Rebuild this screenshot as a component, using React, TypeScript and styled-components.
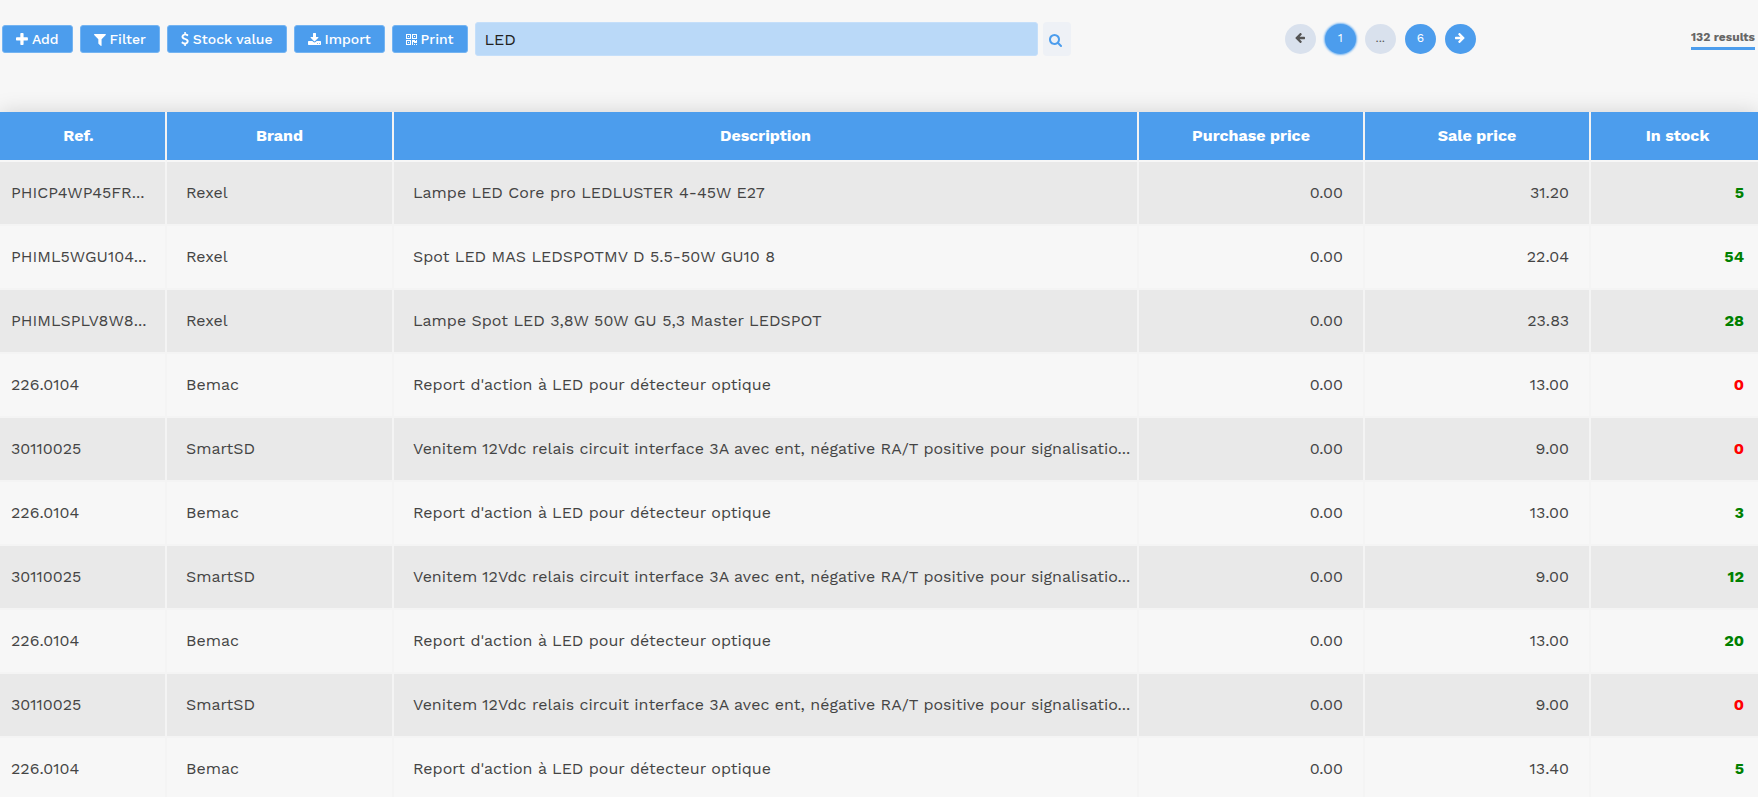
import React from "react";
import styled, { createGlobalStyle } from "styled-components";

const blue = "#4c9ded";
const page = "#f7f7f7";

const GlobalStyle = createGlobalStyle`
  * { box-sizing: border-box; }
  body {
    margin: 0;
    background: ${page};
    color: #444;
    font-family: "Work Sans", Inter, "Liberation Sans", sans-serif;
    font-size: 16px;
    overflow-x: hidden;
    scrollbar-width: none;
  }
  button, input { font-family: inherit; }
`;

const icons = {
  plus: {
    box: "192 128 1408 1536",
    d: "M1600 736v192q0 40-28 68t-68 28h-416v416q0 40-28 68t-68 28h-192q-40 0-68-28t-28-68v-416h-416q-40 0-68-28t-28-68v-192q0-40 28-68t68-28h416v-416q0-40 28-68t68-28h192q40 0 68 28t28 68v416h416q40 0 68 28t28 68z",
  },
  filter: {
    box: "192 128 1408 1536",
    d: "M1595 295q17 41-14 70l-493 493v742q0 42-39 59-13 5-25 5-27 0-45-19l-256-256q-19-19-19-45v-486l-493-493q-31-29-14-70 17-39 59-39h1280q42 0 59 39z",
  },
  dollar: {
    box: "384 0 1024 1792",
    d: "M1362 1185q0 153-99.500 263.500t-258.500 136.500v175q0 14-9 23t-23 9h-135q-13 0-22.500-9.500t-9.500-22.500v-175q-66-9-127.500-31t-101.500-44.500-74-48-46.500-37.500-17.500-18q-17-21-2-41l103-135q7-10 23-12 15-2 24 9l2 2q113 99 243 125 37 8 74 8 81 0 142.500-43t61.500-122q0-28-15-53t-33.500-42-58.500-37.500-66-32-80-32.500q-39-16-61.500-25t-61.500-26.500-62.500-31-56.500-35.500-53.500-42.500-43.500-49-35.500-58-21-66.500-8.500-78q0-138 98-242t255-134v-180q0-13 9.500-22.500t22.500-9.500h135q14 0 23 9t9 23v176q57 6 110.500 23t87 33.500 63.500 37.500 39 29 15 14q17 18 5 38l-81 146q-8 15-23 16-14 3-27-7-3-3-14.500-12t-39-26.500-58.500-32-74.500-26-85.500-11.500q-95 0-155 43t-60 111q0 26 8.500 48t29.500 41.500 39.500 33 56 31 60.500 27 70 27.500q53 20 81 31.500t76 35 75.500 42.500 62 50 53 63.500 31.500 76.500 13 94z",
  },
  download: {
    box: "0 0 1664 1536",
    d: "M1280 1344q0-26-19-45t-45-19-45 19-19 45 19 45 45 19 45-19 19-45zm256 0q0-26-19-45t-45-19-45 19-19 45 19 45 45 19 45-19 19-45zm128-224v320q0 40-28 68t-68 28h-1472q-40 0-68-28t-28-68v-320q0-40 28-68t68-28h465l135 136q58 56 136 56t136-56l136-136h464q40 0 68 28t28 68zm-325-569q17 41-14 70l-448 448q-18 19-45 19t-45-19l-448-448q-31-29-14-70 17-39 59-39h256v-448q0-26 19-45t45-19h256q26 0 45 19t19 45v448h256q42 0 59 39z",
  },
  qrcode: {
    box: "0 0 1408 1408",
    d: "M384 1024v128h-128v-128h128zm0-768v128h-128v-128h128zm768 0v128h-128v-128h128zm-1024 1023h384v-383h-384v383zm0-767h384v-384h-384v384zm768 0h384v-384h-384v384zm-256 256v640h-640v-640h640zm512 512v128h-128v-128h128zm256 0v128h-128v-128h128zm0-512v384h-384v-128h-128v384h-128v-640h384v128h128v-128h128zm-768-768v640h-640v-640h640zm768 0v640h-640v-640h640z",
  },
  search: {
    box: "64 128 1664 1664",
    d: "M1216 832q0-185-131.500-316.500t-316.500-131.500-316.500 131.500-131.500 316.500 131.500 316.500 316.500 131.500 316.500-131.500 131.500-316.500zm512 832q0 52-38 90t-90 38q-54 0-90-38l-343-342q-179 124-399 124-143 0-273.500-55.500t-225-150-150-225-55.500-273.500 55.500-273.500 150-225 225-150 273.500-55.500 273.500 55.500 225 150 150 225 55.500 273.500q0 220-124 399l343 343q37 37 37 90z",
  },
  left: {
    box: "128 192 1536 1536",
    d: "M1664 896v128q0 53-32.500 90.500t-84.500 37.500h-704l293 294q38 36 38 90t-38 90l-75 76q-37 37-90 37-52 0-91-37l-651-652q-37-37-37-90 0-52 37-91l651-650q38-38 91-38 52 0 90 38l75 74q38 38 38 91t-38 91l-293 293h704q52 0 84.500 37.500t32.500 90.500z",
  },
};

type IconName = keyof typeof icons;

const Svg = styled.svg<{ $size: number; $mirror?: boolean }>`
  height: ${(p) => p.$size}px;
  fill: currentColor;
  flex: none;
  ${(p) => p.$mirror && "transform: scaleX(-1);"}
`;

function Icon({ name, size, mirror }: { name: IconName; size: number; mirror?: boolean }) {
  return (
    <Svg viewBox={icons[name].box} $size={size} $mirror={mirror} aria-hidden="true">
      <path d={icons[name].d} />
    </Svg>
  );
}

const Toolbar = styled.header`
  display: grid;
  grid-template-columns: minmax(0, 1070fr) minmax(0, 688fr);
  align-items: center;
  padding: 22px 0 56px 2px;
`;

const Tools = styled.div`
  display: flex;
  align-items: center;
  gap: 7px;
`;

const ActionButton = styled.button`
  display: flex;
  align-items: center;
  justify-content: center;
  gap: 4px;
  height: 28px;
  padding: 0 13px;
  border: 1px solid #74b4f2;
  border-radius: 3px;
  background: ${blue};
  color: #fff;
  font-size: 14px;
  font-weight: 500;
  white-space: nowrap;
`;

const SearchForm = styled.form`
  display: flex;
  flex: 1;
  align-items: center;
  gap: 5px;
  min-width: 0;
`;

const SearchInput = styled.input`
  flex: 1;
  min-width: 0;
  height: 34px;
  padding: 0 9px;
  border: 1px solid #c5dffa;
  border-radius: 3px;
  background: #bad9f8;
  color: #222;
  font-size: 16px;
  outline: none;
`;

const SearchButton = styled.button`
  display: flex;
  align-items: center;
  justify-content: center;
  width: 28px;
  height: 34px;
  padding: 2px 2px 0 0;
  border: 0;
  border-radius: 4px;
  background: #eef1f6;
  color: ${blue};
`;

const Side = styled.div`
  display: flex;
  align-items: center;
  justify-content: space-between;
  padding: 0 3px 0 214px;
`;

const Pager = styled.nav`
  display: flex;
  align-items: center;
  gap: 9px;
`;

const PageButton = styled.button<{ $muted?: boolean; $current?: boolean }>`
  display: flex;
  align-items: center;
  justify-content: center;
  width: 31px;
  height: 30px;
  padding: 0 0 2px;
  border: 0;
  border-radius: 50%;
  background: ${(p) => (p.$muted ? "#d9e1ed" : blue)};
  color: ${(p) => (p.$muted ? "#555" : "#fff")};
  font-size: 12px;
  box-shadow: ${(p) => (p.$current ? "0 0 2px 1px #74b4f2" : "none")};
`;

const Results = styled.span`
  padding-bottom: 2px;
  border-bottom: 3px solid ${blue};
  color: #666;
  font-size: 12px;
  font-weight: 700;
  line-height: 16px;
`;

const Table = styled.table`
  width: 100%;
  table-layout: fixed;
  border-collapse: separate;
  border-spacing: 0;
  box-shadow: 0 0 20px rgba(0, 0, 0, 0.15);
`;

const Column = styled.col<{ $width?: number }>`
  width: ${(p) => (p.$width ? `${p.$width}px` : "auto")};
`;

const HeadCell = styled.th`
  height: 50px;
  padding: 0 20px 2px;
  border-right: 2px solid #f3f3f3;
  border-bottom: 2px solid #f7f7f7;
  background: ${blue};
  color: #fff;
  font-size: 16px;
  font-weight: 700;
  white-space: nowrap;
  &:first-child { padding-left: 12px; }
  &:last-child { padding-right: 14px; border-right: 0; }
`;

const Row = styled.tr`
  background: ${page};
  &:nth-child(odd) { background: #e9e9e9; }
`;

const Cell = styled.td<{ $right?: boolean }>`
  height: 64px;
  padding: 0 20px 1px 19px;
  border-right: 2px solid #f4f4f4;
  border-bottom: 2px solid #f4f4f4;
  text-align: ${(p) => (p.$right ? "right" : "left")};
  white-space: nowrap;
  &:first-child { padding-left: 11px; padding-right: 0; }
  &:last-child { padding-right: 14px; border-right: 0; }
`;

const Stock = styled.strong<{ $empty: boolean }>`
  color: ${(p) => (p.$empty ? "#ff0000" : "#008000")};
`;

const report = ["226.0104", "Bemac", "Report d'action à LED pour détecteur optique", "0.00"];
const venitem = [
  "30110025",
  "SmartSD",
  "Venitem 12Vdc relais circuit interface 3A avec ent, négative RA/T positive pour signalisatio...",
  "0.00",
  "9.00",
];

const rows: string[][] = [
  ["PHICP4WP45FR...", "Rexel", "Lampe LED Core pro LEDLUSTER 4-45W E27", "0.00", "31.20", "5"],
  ["PHIML5WGU104...", "Rexel", "Spot LED MAS LEDSPOTMV D 5.5-50W GU10 8", "0.00", "22.04", "54"],
  ["PHIMLSPLV8W8...", "Rexel", "Lampe Spot LED 3,8W 50W GU 5,3 Master LEDSPOT", "0.00", "23.83", "28"],
  [...report, "13.00", "0"],
  [...venitem, "0"],
  [...report, "13.00", "3"],
  [...venitem, "12"],
  [...report, "13.00", "20"],
  [...venitem, "0"],
  [...report, "13.40", "5"],
];

const actions: { icon: IconName; label: string; size: number }[] = [
  { icon: "plus", label: "Add", size: 13 },
  { icon: "filter", label: "Filter", size: 13 },
  { icon: "dollar", label: "Stock value", size: 14 },
  { icon: "download", label: "Import", size: 12 },
  { icon: "qrcode", label: "Print", size: 11 },
];

export default function App() {
  return (
    <>
      <GlobalStyle />
      <Toolbar>
        <Tools>
          {actions.map((a) => (
            <ActionButton key={a.label} type="button">
              <Icon name={a.icon} size={a.size} />
              {a.label}
            </ActionButton>
          ))}
          <SearchForm onSubmit={(e) => e.preventDefault()}>
            <SearchInput aria-label="Search products" defaultValue="LED" />
            <SearchButton type="submit" aria-label="Search">
              <Icon name="search" size={13} />
            </SearchButton>
          </SearchForm>
        </Tools>
        <Side>
          <Pager aria-label="Pages">
            <PageButton $muted aria-label="Previous page"><Icon name="left" size={10} /></PageButton>
            <PageButton $current aria-current="page">1</PageButton>
            <PageButton $muted>...</PageButton>
            <PageButton>6</PageButton>
            <PageButton aria-label="Next page"><Icon name="left" size={10} mirror /></PageButton>
          </Pager>
          <Results>132 results</Results>
        </Side>
      </Toolbar>
      <Table>
        <colgroup>
          <Column $width={167} />
          <Column $width={227} />
          <Column />
          <Column $width={226} />
          <Column $width={226} />
          <Column $width={167} />
        </colgroup>
        <thead>
          <tr>
            {["Ref.", "Brand", "Description", "Purchase price", "Sale price", "In stock"].map((h) => (
              <HeadCell key={h} scope="col">{h}</HeadCell>
            ))}
          </tr>
        </thead>
        <tbody>
          {rows.map((r, i) => (
            <Row key={i}>
              {r.slice(0, 5).map((text, c) => (
                <Cell key={c} $right={c > 2}>{text}</Cell>
              ))}
              <Cell $right><Stock $empty={r[5] === "0"}>{r[5]}</Stock></Cell>
            </Row>
          ))}
        </tbody>
      </Table>
    </>
  );
}
